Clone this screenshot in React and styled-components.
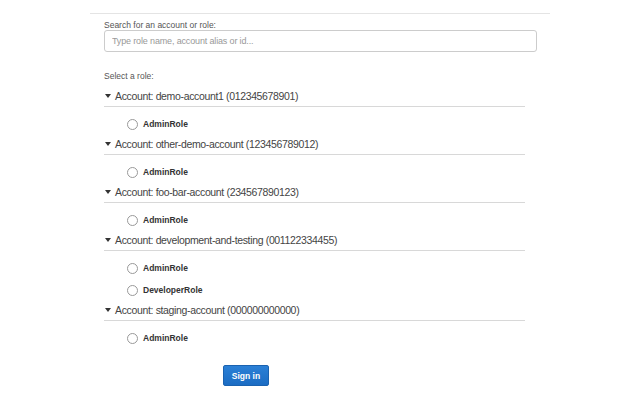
import React from 'react';
import styled, { createGlobalStyle } from 'styled-components';

const GlobalStyle = createGlobalStyle`
    body {
        margin: 0;
        background: #fff;
        font-family: "Liberation Sans", Arial, sans-serif;
        color: #444;
    }
`;

const Page = styled.div`
    width: 640px;
    height: 400px;
    display: flex;
    justify-content: center;
    padding-top: 13px;
    box-sizing: border-box;
`;

const Panel = styled.form`
    width: 460px;
    border-top: 1px solid #e4e4e4;
    padding: 6px 13px 0 14px;
    box-sizing: border-box;
`;

const Label = styled.div`
    font-size: 8.5px;
    line-height: 10px;
    color: #555;
`;

const SearchInput = styled.input`
    display: block;
    width: 433px;
    height: 22px;
    box-sizing: border-box;
    border: 1px solid #ccc;
    border-radius: 3px;
    padding: 0 7px;
    font-family: inherit;
    font-size: 9px;
    letter-spacing: -0.15px;
    color: #333;
    outline: none;
    &::placeholder {
        color: #999;
    }
`;

const RoleLabel = styled(Label)`
    margin-top: 19px;
    margin-bottom: 6px;
`;

const AccountHeader = styled.div`
    display: flex;
    align-items: center;
    width: 421px;
    height: 20px;
    border-bottom: 1px solid #d8d8d8;
    font-size: 10.5px;
    letter-spacing: -0.35px;
    color: #444;
    padding-bottom: 1px;
    box-sizing: border-box;
`;

const Caret = styled.span`
    width: 0;
    height: 0;
    border-left: 3px solid transparent;
    border-right: 3px solid transparent;
    border-top: 4px solid #333;
    margin: 0 4px 0 1px;
`;

const Roles = styled.div`
    padding-top: 6px;
`;

const RoleRow = styled.label`
    display: flex;
    align-items: center;
    height: 22px;
    padding-left: 23px;
    font-size: 8.5px;
    font-weight: bold;
    color: #333;
`;

const Radio = styled.span`
    width: 9px;
    height: 9px;
    border: 1px solid #999;
    border-radius: 50%;
    margin-right: 5px;
    background: #fff;
`;

const Footer = styled.div`
    display: flex;
    padding: 16px 0 0 119px;
`;

const SignIn = styled.button`
    width: 46px;
    height: 21px;
    border: 1px solid #1a62b0;
    border-radius: 2px;
    background: linear-gradient(#2b80d6, #1b6cc3);
    color: #fff;
    font-family: inherit;
    font-size: 8.5px;
    font-weight: bold;
    padding: 0;
`;

const accounts = [
    { name: 'demo-account1', id: '012345678901', roles: ['AdminRole'] },
    { name: 'other-demo-account', id: '123456789012', roles: ['AdminRole'] },
    { name: 'foo-bar-account', id: '234567890123', roles: ['AdminRole'] },
    { name: 'development-and-testing', id: '001122334455', roles: ['AdminRole', 'DeveloperRole'] },
    { name: 'staging-account', id: '000000000000', roles: ['AdminRole'] },
];

const App = () => {
    return (
        <Page>
            <GlobalStyle />
            <Panel onSubmit={e => e.preventDefault()}>
                <Label>Search for an account or role:</Label>
                <SearchInput placeholder="Type role name, account alias or id..." />
                <RoleLabel>Select a role:</RoleLabel>
                {accounts.map(a => (
                    <div key={a.id}>
                        <AccountHeader>
                            <Caret />
                            Account: {a.name} ({a.id})
                        </AccountHeader>
                        <Roles>
                            {a.roles.map(r => (
                                <RoleRow key={r}>
                                    <Radio />
                                    {r}
                                </RoleRow>
                            ))}
                        </Roles>
                    </div>
                ))}
                <Footer>
                    <SignIn type="submit">Sign in</SignIn>
                </Footer>
            </Panel>
        </Page>
    );
};

export default App;
